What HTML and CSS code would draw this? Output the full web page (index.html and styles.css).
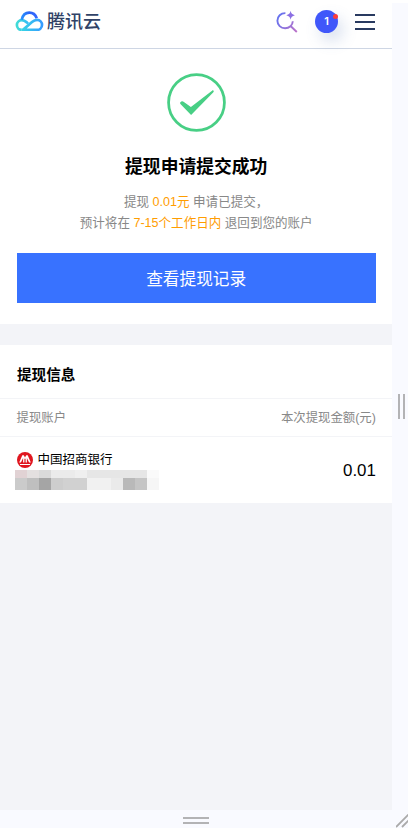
FILE: index.html
```html
<!DOCTYPE html>
<html lang="zh-CN">
<head>
<meta charset="utf-8">
<title>提现申请提交成功</title>
<link rel="stylesheet" href="styles.css">
</head>
<body>
<div class="frame">
  <div class="page">
    <header class="header">
      <div class="brand">
        <svg class="cloud" viewBox="0 0 28 20" fill="none" stroke-width="2.6">
          <defs>
            <linearGradient id="top" x1="0" x2="1"><stop offset="0" stop-color="#2890ff"/><stop offset=".5" stop-color="#2b64f5"/><stop offset="1" stop-color="#3567ff"/></linearGradient>
            <linearGradient id="left" x1="0" x2="1"><stop offset="0" stop-color="#40dbd6"/><stop offset="1" stop-color="#35bcf7"/></linearGradient>
            <linearGradient id="right" x1="0" x2="1"><stop offset="0" stop-color="#35d5e5"/><stop offset="1" stop-color="#369cff"/></linearGradient>
          </defs>
          <path d="M12.6 12.2 11.4 11C9.6 9.4 8.2 8.9 6.5 8.9a4.7 4.7 0 0 0 0 9.4" stroke="url(#left)"/>
          <path d="M6.5 8.5C7.3 4.4 10 1.6 13.8 1.6c3.6 0 6.1 2.2 7.2 5.4" stroke="url(#top)"/>
          <path d="M6.5 18.3h14.6a4.9 4.9 0 0 0 .2-9.8c-2 0-3.4.8-4.9 2.1L8 18" stroke="url(#right)"/>
        </svg>
        <span class="brand-name">腾讯云</span>
      </div>
      <div class="tools">
        <svg class="search" viewBox="0 0 22 22" fill="none">
          <defs><linearGradient id="lens" gradientUnits="userSpaceOnUse" x1="0" y1="5" x2="22" y2="20"><stop stop-color="#5f73f2"/><stop offset="1" stop-color="#be72c7"/></linearGradient></defs>
          <path d="M9.4 2.1C4.8 2 1.4 5.3 1.4 9.8c0 4.2 3.4 7.5 7.7 7.5s7.5-3.2 7.7-7.1M14.3 14.8l6.5 6.2" stroke="url(#lens)" stroke-width="1.9"/>
          <path d="M14.6-.2c.5 2.5 1.6 3.8 4.3 4.5-2.7.7-3.8 1.9-4.3 4.5-.5-2.6-1.6-3.8-4.3-4.5 2.7-.7 3.8-2 4.3-4.5Z" fill="#8b6fe3"/>
        </svg>
        <span class="avatar">1<i class="dot"></i></span>
        <span class="menu"><i></i><i></i><i></i></span>
      </div>
    </header>
    <section class="result">
      <svg class="success" viewBox="0 0 60 60">
        <circle cx="30" cy="30" r="28.4" fill="none" stroke="#48cf85" stroke-width="2.8"/>
        <path d="M13.6 29.8c1.1-1.5 2.4-1.3 3.6-.4l7.1 5.2L45.8 18c.8-.6 1.5-.3 1.7.2.2.5 0 1-.6 1.6L24.5 42.6 13.9 31.9c-.6-.6-.8-1.3-.3-2.1Z" fill="#48cf85"/>
      </svg>
      <h1 class="title">提现申请提交成功</h1>
      <p class="desc">提现 <b>0.01元</b> 申请已提交，<br>预计将在 <b>7-15个工作日内</b> 退回到您的账户</p>
      <button class="action">查看提现记录</button>
    </section>
    <section class="info">
      <h2 class="info-title">提现信息</h2>
      <div class="row labels"><span>提现账户</span><span>本次提现金额(元)</span></div>
      <div class="row account">
        <div>
          <div class="bank">
            <svg class="bank-logo" viewBox="0 0 16 16"><circle cx="8" cy="8" r="8" fill="#e0161f"/><path d="M2.2 10.6 5.3 3.2h1.5L8 5.6l1.2-2.4h1.5l3.1 7.4h-1.7L9.9 5.9v4.7H8.6V7.2L8 6.2l-.6 1v3.4H6.1V5.9l-2.2 4.7ZM3 12h10v1.1H3Z" fill="#fff"/></svg>
            <span>中国招商银行</span>
          </div>
          <div class="mosaic">
            <i class="m1"></i><i class="m2"></i><i class="m3"></i><i class="m4"></i><i class="m4"></i><i class="m5"></i><i class="m6"></i><i class="m6"></i><i class="m6"></i><i class="m6"></i><i class="m6"></i><i class="m7"></i>
            <i class="n1"></i><i class="n2"></i><i class="n3"></i><i class="n4"></i><i class="n5"></i><i class="n5"></i><i class="n6"></i><i class="n6"></i><i class="n7"></i><i class="n8"></i><i class="n9"></i><i class="n10"></i>
          </div>
        </div>
        <span class="amount">0.01</span>
      </div>
    </section>
  </div>
  <div class="side"><span class="grip-v"></span></div>
  <div class="bottom"><span class="grip-h"></span></div>
  <div class="corner"><svg class="resize" viewBox="0 0 12 14"><path d="M0 13 13 0M6 13l7-7" stroke="#aaa" stroke-width="1.8"/></svg></div>
</div>
</body>
</html>
```
FILE: styles.css
```css
* { box-sizing: border-box; }
body {
  margin: 0;
  background: #f9faff;
  font-family: "Liberation Sans", "Noto Sans CJK SC", sans-serif;
  color: #000;
}
h1, h2, p { margin: 0; }
i { display: block; }
.frame {
  display: grid;
  grid-template-columns: 392.4px 1fr;
  grid-template-rows: 810px 18px;
  width: 408px;
  height: 828px;
  overflow: hidden;
}
.page { background: #f3f4f8; }
.header {
  display: flex;
  justify-content: space-between;
  height: 49px;
  padding: 9px 17.4px 0 15px;
  border-bottom: 1px solid #ced6e4;
  background: #fff;
}
.brand { display: flex; height: 25px; align-items: center; }
.cloud { width: 29px; height: 20.7px; margin: -1px 3px 0 0; }
.brand-name { padding-top: 2px; font-size: 18px; line-height: 25px; font-weight: 500; color: #304267; }
.tools { display: flex; align-items: center; height: 25px; }
.search { width: 22px; height: 22px; margin-right: 17px; overflow: visible; }
.avatar {
  position: relative;
  width: 23px;
  height: 23px;
  margin-right: 17px;
  border-radius: 50%;
  background: #4057fa;
  box-shadow: 5px 8px 15px rgba(80, 115, 180, .23);
  color: #fff;
  font: 600 11px/23px Inter, sans-serif;
  text-align: center;
}
.dot {
  position: absolute;
  top: 4px;
  right: 0;
  width: 5px;
  height: 5px;
  border-radius: 50%;
  background: #fc3e3b;
}
.menu { display: grid; gap: 5px; width: 20px; }
.menu i { height: 2px; background: #293a60; }
.result {
  display: flex;
  flex-direction: column;
  align-items: center;
  height: 275px;
  padding: 24px 16.5px 0;
  background: #fff;
}
.success { width: 59px; height: 59px; }
.title { margin-top: 21px; font-size: 17.8px; line-height: 28px; font-weight: 700; }
.desc {
  margin-top: 11px;
  font-size: 12.55px;
  line-height: 20.5px;
  color: #888;
  text-align: center;
}
.desc b { font-weight: 400; color: #ff9d00; }
.action {
  width: 100%;
  height: 50px;
  margin-top: 20px;
  padding: 0;
  border: 0;
  background: #3872ff;
  color: #fff;
  font: inherit;
  font-size: 16.7px;
}
.info { height: 158px; margin-top: 21px; background: #fff; }
.info-title {
  height: 54px;
  padding-left: 17px;
  border-bottom: 1px solid #f3f4f7;
  font-size: 14.6px;
  line-height: 60px;
}
.row { display: flex; justify-content: space-between; padding: 0 16.5px; }
.labels {
  height: 38px;
  border-bottom: 1px solid #f3f4f7;
  font-size: 12.4px;
  line-height: 39px;
  color: #888;
}
.account { padding-top: 13px; }
.bank { display: flex; align-items: center; gap: 5px; height: 19px; font-size: 12.5px; line-height: 18px; }
.bank span { margin-top: 1px; }
.bank-logo { width: 16px; height: 16px; margin-top: 1px; }
.mosaic {
  display: grid;
  grid-template: 8px 12px / repeat(12, 12px);
  margin: 1px 0 0 -1.5px;
}
.m1 { background: #e1d2d4; }
.m2 { background: #e4e0e0; }
.m3 { background: #dadada; }
.m4 { background: #ebebeb; }
.m5 { background: #efefef; }
.m6 { background: #e6e6e6; }
.m7 { background: #fafafa; }
.n1 { background: #cbcbcb; }
.n2 { background: #bfbfbf; }
.n3 { background: #a5a5a5; }
.n4 { background: #cdcdcd; }
.n5 { background: #d1d1d1; }
.n6 { background: #f1f1f1; }
.n7 { background: #eaeaea; }
.n8 { background: #b9b9b9; }
.n9 { background: #c5c5c5; }
.n10 { background: #f6f6f6; }
.amount { font-size: 16.9px; line-height: 42px; }
.side { border-top: 3px solid #fff; padding: 391px 0 0 6px; }
.grip-v {
  display: block;
  width: 7px;
  height: 25px;
  border: solid #b3b3b5;
  border-width: 0 2px;
}
.bottom { display: flex; justify-content: center; padding-top: 7px; }
.grip-h { width: 26px; height: 7px; border: solid #b3b3b5; border-width: 2px 0; }
.corner { display: flex; justify-content: flex-end; padding-top: 4px; }
.resize { width: 12px; height: 14px; }
```
